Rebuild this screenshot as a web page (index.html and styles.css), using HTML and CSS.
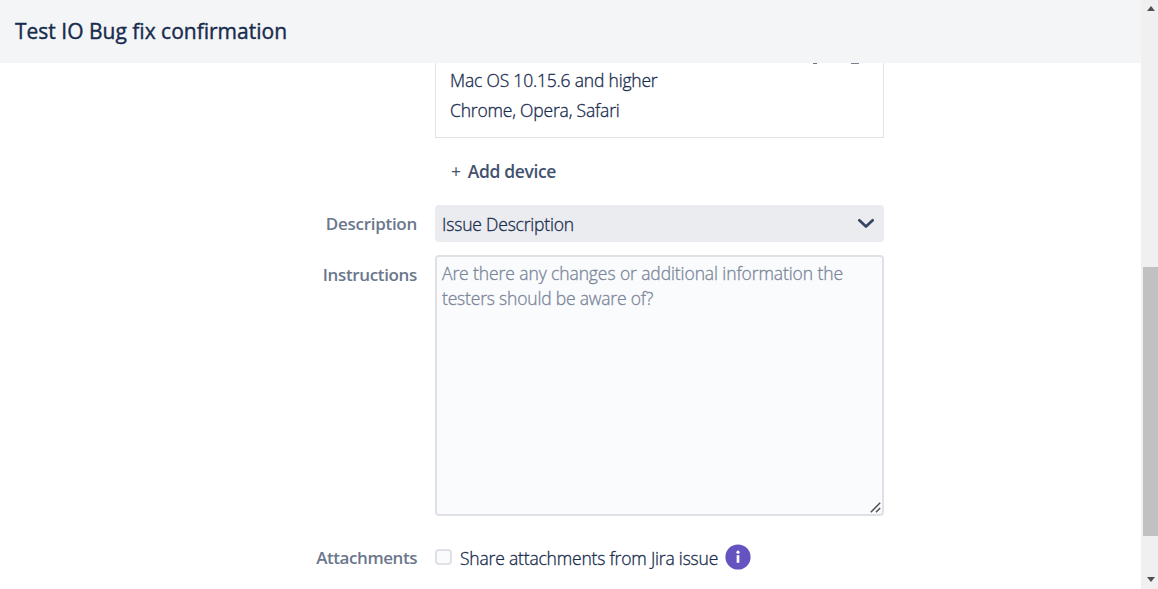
FILE: index.html
```html
<!DOCTYPE html>
<html lang="en">
<head>
<meta charset="utf-8">
<title>Test IO Bug fix confirmation</title>
<link rel="stylesheet" href="styles.css">
</head>
<body>
<div class="dialog">
  <div class="main">
    <header class="header"><h1 class="title">Test IO Bug fix confirmation</h1></header>
    <form class="form">
      <div class="device-area">
        <div class="device-card">
          <svg class="actions" width="50" height="1" viewBox="0 0 50 1"><path d="M4 .5h4" stroke="#6b7488"/><path d="M42 .5h8" stroke="#7a8292"/></svg>
          <p class="line">Mac OS 10.15.6 and higher</p>
          <p class="line">Chrome, Opera, Safari</p>
        </div>
        <button type="button" class="add"><span class="plus">+</span><span class="add-text">Add device</span></button>
      </div>
      <div class="row row-description">
        <label class="label label-description">Description</label>
        <div class="select">
          <span>Issue Description</span>
          <svg width="18" height="12" viewBox="0 0 18 12"><path d="M2.3 2.3 9 8.6l6.700-6.300" fill="none" stroke="#344563" stroke-width="2.700" stroke-linecap="round" stroke-linejoin="round"/></svg>
        </div>
      </div>
      <div class="row row-instructions">
        <label class="label label-instructions">Instructions</label>
        <div class="textarea">
          <span class="hint">Are there any changes or additional information the</span><br>testers should be aware of?
          <svg class="grip" width="11" height="11" viewBox="0 0 11 11"><path d="M.8 10.200 10.200.8M6 10.200 10.200 6" fill="none" stroke="#505050" stroke-width="1.500"/></svg>
        </div>
      </div>
      <div class="row row-attachments">
        <label class="label label-attachments">Attachments</label>
        <div class="share">
          <span class="checkbox"></span>
          <span class="share-text">Share attachments from Jira issue</span>
          <svg class="info" width="26" height="26" viewBox="0 0 26 26"><circle cx="13" cy="13" r="12.600" fill="#6554c0"/><circle cx="13" cy="8.200" r="1.600" fill="#fff"/><path d="M13 11.200v7.600" stroke="#fff" stroke-width="2.700"/></svg>
        </div>
      </div>
    </form>
  </div>
  <div class="scrollbar">
    <svg width="17" height="17" viewBox="0 0 17 17"><path d="M6 11h8l-4-5z" fill="#505050"/></svg>
    <div class="thumb"></div>
    <svg width="17" height="17" viewBox="0 0 17 17"><path d="M6 5h8l-4 5z" fill="#505050"/></svg>
  </div>
</div>
</body>
</html>
```
FILE: styles.css
```css
* { box-sizing: border-box; }
body {
  margin: 0;
  overflow: hidden;
  background: #fff;
  color: #172b4d;
  font: 300 17.500px/30px "Open Sans", "Noto Sans", sans-serif;
  letter-spacing: -.19px;
  -webkit-text-stroke: .3px;
}
svg { display: block; flex: none; }
.dialog { display: flex; height: 589px; }
.main { flex: 1; }
.header { display: flex; align-items: center; height: 63px; padding: 0 0 2px 15px; background: #f4f5f7; }
.title { margin: 0; font-size: 21px; font-weight: 400; line-height: 30px; letter-spacing: 0; -webkit-text-stroke: .4px; white-space: nowrap; }
.form { width: 884px; }
.device-area { margin-left: 435px; }
.device-card { height: 75px; padding: 0 14px 11px; border: 1px solid #e1e3e7; border-top: 0; }
.actions { margin: 0 10px 1px auto; }
.line { margin: 0; white-space: nowrap; }
.add { display: flex; gap: 6px; margin: 18px 0 0; padding: 0 0 0 16px; border: 0; background: none; color: #42526e; font: inherit; font-weight: 600; line-height: 30px; letter-spacing: -.35px; -webkit-text-stroke: 0; }
.add-text { margin-left: 1px; }
.plus { font-weight: 400; }
.row { display: grid; grid-template-columns: 417px 449px; column-gap: 18px; }
.row-description { margin-top: 19px; }
.row-instructions { margin-top: 13px; }
.row-attachments { margin-top: 26px; }
.label { padding-top: 5px; color: #6b778c; font-size: 17px; font-weight: 600; text-align: right; white-space: nowrap; -webkit-text-stroke: 0; }
.label-description { padding-top: 4px; letter-spacing: -.28px; }
.label-instructions { letter-spacing: -.35px; }
.label-attachments { padding-top: 1px; letter-spacing: -.44px; }
.select { display: flex; align-items: center; justify-content: space-between; height: 37px; padding: 0 9px 0 7px; border-radius: 4px; background: #ebecf0; white-space: nowrap; }
.textarea { position: relative; height: 261px; padding: 4px 5px; border: 2px solid #dfe1e6; border-radius: 4px; background: #fafbfc; color: #7a869a; line-height: 25px; white-space: nowrap; }
.hint { letter-spacing: -.1px; }
.grip { position: absolute; right: 1px; bottom: 1px; }
.share { display: flex; align-items: center; height: 30px; white-space: nowrap; }
.checkbox { width: 17px; height: 16px; margin-right: 8px; border: 2px solid #dfe1e6; border-radius: 4px; background: #fafbfc; }
.share-text { width: 265px; padding-top: 2px; }
.scrollbar { display: flex; flex-direction: column; width: 17px; background: #f0f0f0; }
.thumb { height: 269px; margin: 250px 0 36px 2px; background: #c1c1c1; }
```
